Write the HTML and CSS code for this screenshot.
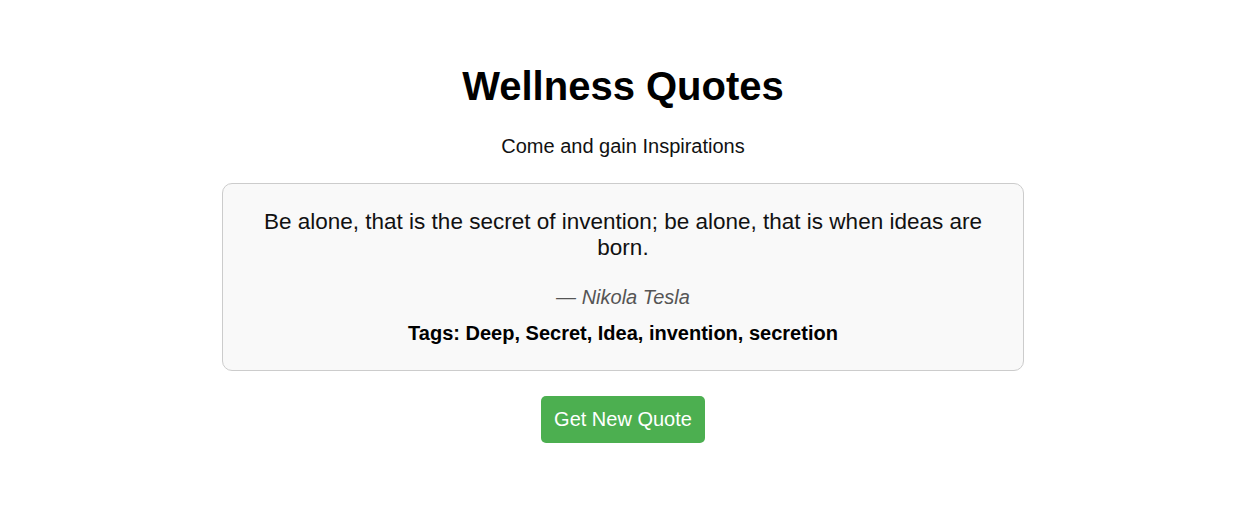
FILE: index.html
```html
<!DOCTYPE html>
<html lang="en">
<head>
<meta charset="utf-8">
<title>Wellness Quotes</title>
<link rel="stylesheet" href="styles.css">
</head>
<body>
<main class="page">
  <h1 class="title">Wellness Quotes</h1>
  <p class="subtitle">Come and gain Inspirations</p>
  <section class="card">
    <p class="quote">Be alone, that is the secret of invention; be alone, that is when ideas are born.</p>
    <p class="author">— Nikola Tesla</p>
    <p class="tags">Tags: Deep, Secret, Idea, invention, secretion</p>
  </section>
  <button class="btn" type="button">Get New Quote</button>
</main>
</body>
</html>
```

FILE: styles.css
```css
* { box-sizing: border-box; }
html, body { margin: 0; padding: 0; background: #fff; }
body {
  font-family: "Liberation Sans", Arial, sans-serif;
  color: #000;
}
.page {
  display: flex;
  flex-direction: column;
  align-items: center;
  text-align: center;
  padding-top: 64px;
}
.title {
  margin: 0;
  font-size: 40px;
  font-weight: bold;
  line-height: 45px;
}
.subtitle {
  margin: 26px 0 0;
  font-size: 20px;
  line-height: 23px;
  color: #111;
}
.card {
  margin-top: 25px;
  width: 802px;
  border: 1px solid #ccc;
  border-radius: 10px;
  background: #f9f9f9;
  padding: 25px 20px 25px;
}
.quote {
  margin: 0;
  font-size: 22.5px;
  line-height: 26px;
  color: #111;
}
.author {
  margin: 25px 0 0;
  font-size: 20px;
  line-height: 23px;
  font-style: italic;
  color: #555;
}
.tags {
  margin: 13px 0 0;
  font-size: 20px;
  line-height: 23px;
  font-weight: bold;
}
.btn {
  margin-top: 25px;
  border: none;
  border-radius: 5px;
  background: #4caf50;
  color: #fff;
  font-family: "Liberation Sans", Arial, sans-serif;
  font-size: 20px;
  line-height: 23px;
  padding: 12px 13px;
  cursor: pointer;
}
```
